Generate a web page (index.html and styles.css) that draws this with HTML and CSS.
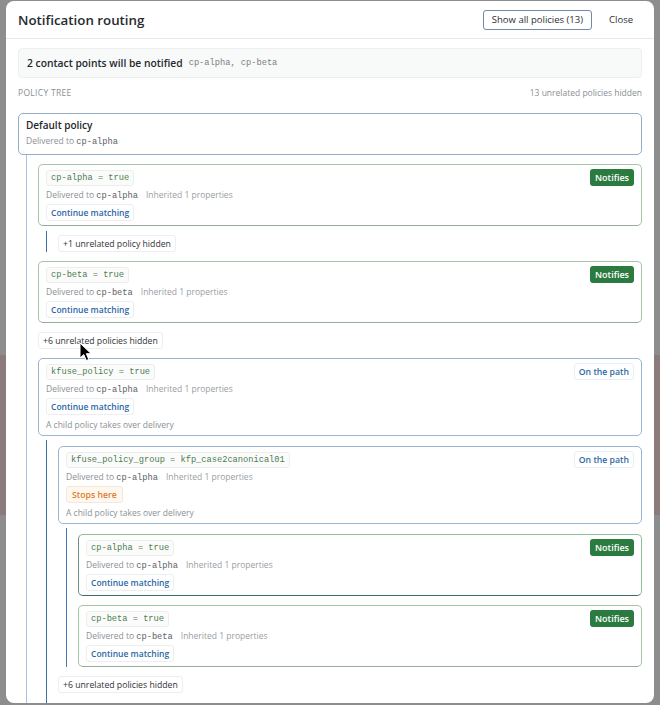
FILE: index.html
```html
<!DOCTYPE html>
<html>
<head>
<meta charset="utf-8">
<link rel="stylesheet" href="styles.css">
</head>
<body>
<div class="modal">
  <div class="modal-header">
    <h1 class="title">Notification routing</h1>
    <div class="actions">
      <button class="btn-outline">Show all policies (13)</button>
      <button class="btn-text">Close</button>
    </div>
  </div>
  <div class="modal-body">
    <div class="summary">
      <span class="summary-text">2 contact points will be notified</span>
      <span class="mono muted">cp-alpha, cp-beta</span>
    </div>
    <div class="tree-head">
      <span class="tree-label">POLICY TREE</span>
      <span class="tree-hidden">13 unrelated policies hidden</span>
    </div>

    <div class="node root">
      <div class="card card-default">
        <div class="card-title">Default policy</div>
        <div class="meta">Delivered to <span class="mono dark">cp-alpha</span></div>
      </div>
      <div class="children line-light root-children">
        <div class="node">
          <div class="card card-green">
            <div class="row1">
              <span class="matcher">cp-alpha = true</span>
              <span class="badge-notify">Notifies</span>
            </div>
            <div class="meta">Delivered to <span class="mono dark">cp-alpha</span><span class="inh">Inherited 1 properties</span></div>
            <span class="chip chip-blue">Continue matching</span>
          </div>
          <div class="children line-dark sub">
            <span class="chip chip-plain">+1 unrelated policy hidden</span>
          </div>
        </div>
        <div class="card card-green">
          <div class="row1">
            <span class="matcher">cp-beta = true</span>
            <span class="badge-notify">Notifies</span>
          </div>
          <div class="meta">Delivered to <span class="mono dark">cp-beta</span><span class="inh">Inherited 1 properties</span></div>
          <span class="chip chip-blue">Continue matching</span>
        </div>
        <span class="chip chip-plain">+6 unrelated policies hidden</span>
        <div class="node">
          <div class="card card-blue">
            <div class="row1">
              <span class="matcher">kfuse_policy = true</span>
              <span class="badge-path">On the path</span>
            </div>
            <div class="meta">Delivered to <span class="mono dark">cp-alpha</span><span class="inh">Inherited 1 properties</span></div>
            <span class="chip chip-blue">Continue matching</span>
            <div class="note">A child policy takes over delivery</div>
          </div>
          <div class="children line-dark tail">
            <div class="node">
              <div class="card card-blue">
                <div class="row1">
                  <span class="matcher">kfuse_policy_group = kfp_case2canonical01</span>
                  <span class="badge-path">On the path</span>
                </div>
                <div class="meta">Delivered to <span class="mono dark">cp-alpha</span><span class="inh">Inherited 1 properties</span></div>
                <span class="chip chip-orange">Stops here</span>
                <div class="note">A child policy takes over delivery</div>
              </div>
              <div class="children line-mid inner">
                <div class="card card-green card-focus">
                  <div class="row1">
                    <span class="matcher">cp-alpha = true</span>
                    <span class="badge-notify">Notifies</span>
                  </div>
                  <div class="meta">Delivered to <span class="mono dark">cp-alpha</span><span class="inh">Inherited 1 properties</span></div>
                  <span class="chip chip-blue">Continue matching</span>
                </div>
                <div class="card card-green">
                  <div class="row1">
                    <span class="matcher">cp-beta = true</span>
                    <span class="badge-notify">Notifies</span>
                  </div>
                  <div class="meta">Delivered to <span class="mono dark">cp-beta</span><span class="inh">Inherited 1 properties</span></div>
                  <span class="chip chip-blue">Continue matching</span>
                </div>
              </div>
            </div>
            <span class="chip chip-plain">+6 unrelated policies hidden</span>
          </div>
        </div>
      </div>
    </div>
  </div>
  <svg class="cursor" width="14" height="20" viewBox="0 0 14 20"><path d="M1 1 L1 16 L4.8 12.6 L7.3 18.5 L9.8 17.4 L7.3 11.7 L12.2 11.7 Z" fill="#000" stroke="#fff" stroke-width="1"/></svg>
</div>
</body>
</html>
```
FILE: styles.css
```css
* { box-sizing: border-box; }
html, body { margin: 0; height: 705px; overflow: hidden; }
body {
  padding: 1px 6px 0 6px;
  font-family: "Open Sans", "Noto Sans", sans-serif;
  background: linear-gradient(to bottom, #8d8d8d 0, #8d8d8d 355px, #8b7b7d 355px, #8b7b7d 515px, #8d8d8d 515px);
}
.modal {
  position: relative;
  width: 648px;
  height: 702px;
  background: #fff;
  border-radius: 8px;
  overflow: hidden;
}
.modal-header {
  height: 38px;
  padding: 0 21px 0 12px;
  display: flex;
  align-items: center;
  justify-content: space-between;
  border-bottom: 1px solid #e6e8ea;
}
.title {
  margin: 0;
  font-size: 13.3px;
  font-weight: 600;
  color: #25292e;
}
.actions { display: flex; align-items: center; gap: 17px; }
.btn-outline {
  height: 20px;
  padding: 0 8px;
  border: 1px solid #6f8ba6;
  border-radius: 3px;
  background: #fff;
  font-family: inherit;
  font-size: 9.5px;
  color: #2d3136;
}
.btn-text {
  border: 0;
  background: none;
  padding: 0;
  font-family: inherit;
  font-size: 9.5px;
  color: #2d3136;
}
.modal-body { padding: 9px 12px 0 12px; }
.summary {
  height: 30px;
  border: 1px solid #eceeef;
  background: #f8f9f9;
  border-radius: 4px;
  padding: 0 8px;
  display: flex;
  align-items: center;
  gap: 6px;
}
.summary-text { font-size: 10.3px; font-weight: 600; color: #24282d; }
.mono { font-family: "Liberation Mono", "DejaVu Sans Mono", monospace; font-size: 8.7px; }
.muted { color: #7a7f85; }
.dark { color: #5d6166; }
.tree-head {
  margin-top: 8px;
  height: 12px;
  display: flex;
  justify-content: space-between;
  align-items: center;
  font-size: 8.5px;
  color: #8a8f94;
}
.tree-label { letter-spacing: 0.3px; }
.node { display: flex; flex-direction: column; }
.root { margin-top: 15px; }
.card {
  display: flex;
  flex-direction: column;
  align-items: flex-start;
  gap: 3px;
  height: 62px;
  border: 1px solid #a9c4a9;
  border-radius: 5px;
  padding: 4px 7px 4px 7px;
  background: #fff;
}
.card-default {
  height: 42px;
  border-color: #93adc7;
  padding: 4px 7px 0 7px;
}
.card-blue { height: 78px; }
.card-green { border-color: #a8c4a8; border-bottom-color: #98aa98; }
.card-blue { border-color: #9ab5d0; }
.card-focus { border-color: #8fbf95; border-bottom-color: #3e6e62; border-left-color: #6f8f7f; }
.card-title { font-size: 10px; font-weight: 600; color: #24282d; line-height: 14px; }
.row1 {
  align-self: stretch;
  height: 17px;
  flex: none;
  display: flex;
  justify-content: space-between;
  align-items: center;
}
.matcher {
  height: 16px;
  display: inline-flex;
  align-items: center;
  padding: 0 4px;
  border: 1px solid #eceeec;
  border-radius: 3px;
  background: #fbfbfb;
  font-family: "Liberation Mono", "DejaVu Sans Mono", monospace;
  font-size: 8.7px;
  color: #4c7d4f;
}
.badge-notify {
  height: 17px;
  display: inline-flex;
  align-items: center;
  padding: 0 5px;
  border-radius: 3px;
  background: #2b7a3f;
  color: #fff;
  font-size: 9px;
  font-weight: 600;
}
.badge-path {
  height: 17px;
  display: inline-flex;
  align-items: center;
  padding: 0 4px;
  border: 1px solid #e6eef6;
  border-radius: 3px;
  background: #fff;
  color: #2c69a5;
  font-size: 8.7px;
  font-weight: 600;
}
.meta {
  height: 12px;
  line-height: 12px;
  flex: none;
  font-size: 8.5px;
  color: #8c9095;
}
.inh { margin-left: 8px; color: #9a9ea3; }
.chip {
  height: 17px;
  flex: none;
  display: inline-flex;
  align-items: center;
  align-self: flex-start;
  padding: 0 5px;
  border: 1px solid #eceef0;
  border-radius: 3px;
  background: #fff;
  font-size: 8.7px;
}
.chip-blue { color: #2a67a3; font-weight: 600; font-size: 8.5px; padding: 0 4px; }
.chip-orange { color: #e07a1f; font-weight: 600; background: #fff8f1; border-color: #f6e6d6; }
.chip-plain { color: #2f3338; padding: 0 4px; }
.note { height: 12px; flex: none; font-size: 8.5px; color: #8c9095; line-height: 12px; margin-top: 1px; }
.children {
  display: flex;
  flex-direction: column;
  gap: 9px;
  margin-left: 8px;
  padding-left: 11px;
  border-left: 1px solid #a9c2db;
}
.root-children { padding-top: 9px; padding-bottom: 40px; }
.line-dark { border-left-color: #3a6fa4; }
.line-mid { border-left-color: #4179b3; }
.sub { margin-top: 5px; padding-top: 4px; margin-bottom: 0; }
.tail { margin-top: 4px; padding-top: 6px; padding-bottom: 30px; }
.inner { margin-top: 4px; padding-top: 6px; margin-bottom: 0; }
.cursor { position: absolute; left: 73px; top: 341px; }
```
